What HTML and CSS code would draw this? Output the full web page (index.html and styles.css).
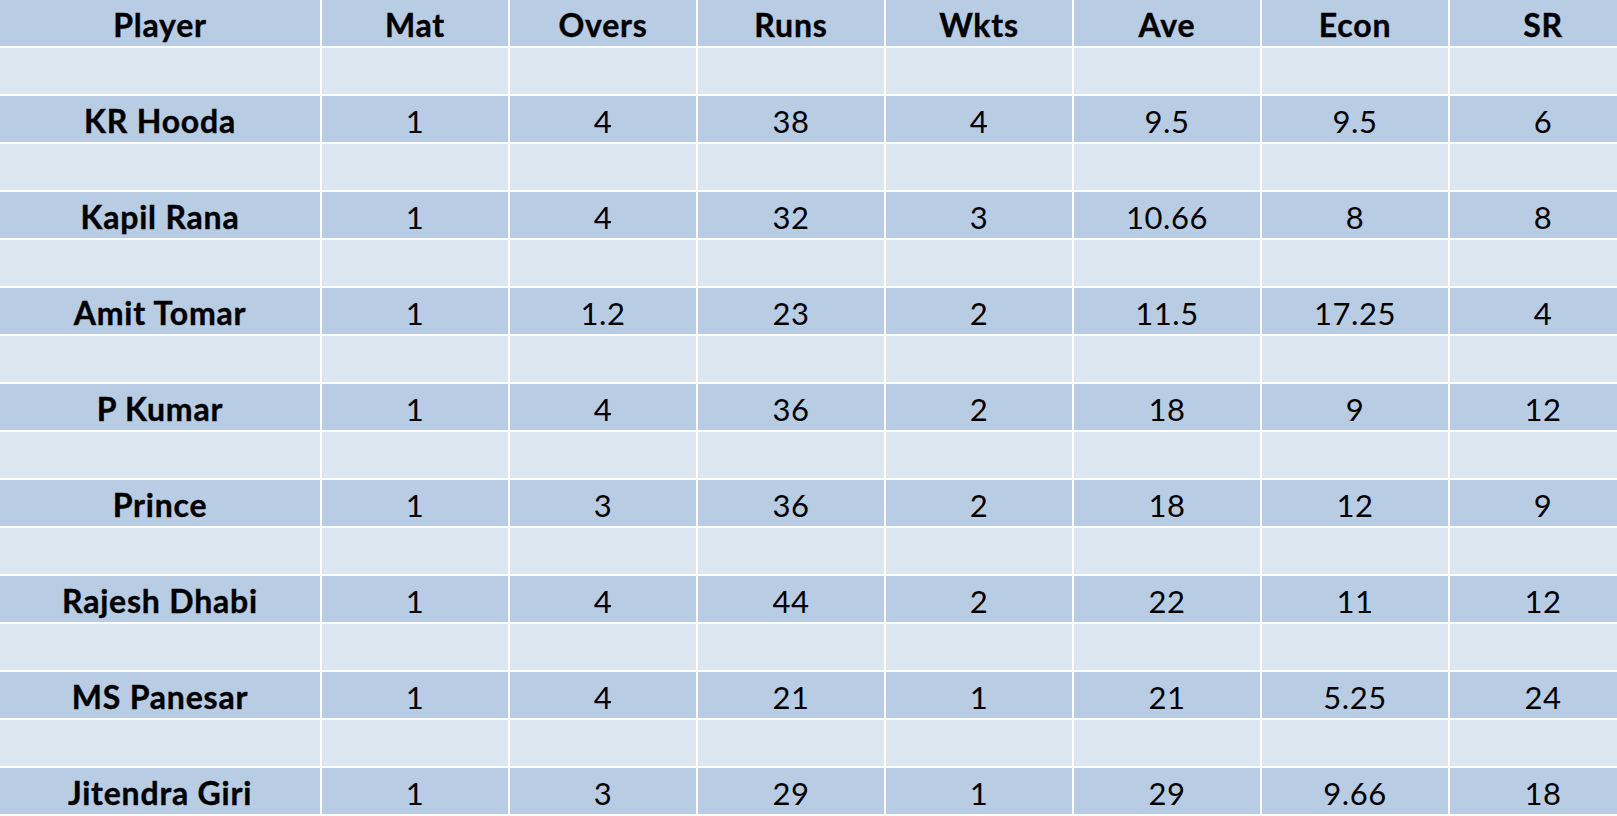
FILE: index.html
```html
<!DOCTYPE html>
<html>
<head>
<meta charset="utf-8">
<link rel="stylesheet" href="styles.css">
</head>
<body>
<div class="sheet">
  <div class="row dark head">
    <div class="cell name">Player</div><div class="cell">Mat</div><div class="cell">Overs</div><div class="cell">Runs</div><div class="cell">Wkts</div><div class="cell">Ave</div><div class="cell">Econ</div><div class="cell">SR</div>
  </div>
  <div class="row light"><div class="cell"></div><div class="cell"></div><div class="cell"></div><div class="cell"></div><div class="cell"></div><div class="cell"></div><div class="cell"></div><div class="cell"></div></div>
  <div class="row dark">
    <div class="cell name">KR Hooda</div><div class="cell">1</div><div class="cell">4</div><div class="cell">38</div><div class="cell">4</div><div class="cell">9.5</div><div class="cell">9.5</div><div class="cell">6</div>
  </div>
  <div class="row light"><div class="cell"></div><div class="cell"></div><div class="cell"></div><div class="cell"></div><div class="cell"></div><div class="cell"></div><div class="cell"></div><div class="cell"></div></div>
  <div class="row dark">
    <div class="cell name">Kapil Rana</div><div class="cell">1</div><div class="cell">4</div><div class="cell">32</div><div class="cell">3</div><div class="cell">10.66</div><div class="cell">8</div><div class="cell">8</div>
  </div>
  <div class="row light"><div class="cell"></div><div class="cell"></div><div class="cell"></div><div class="cell"></div><div class="cell"></div><div class="cell"></div><div class="cell"></div><div class="cell"></div></div>
  <div class="row dark">
    <div class="cell name">Amit Tomar</div><div class="cell">1</div><div class="cell">1.2</div><div class="cell">23</div><div class="cell">2</div><div class="cell">11.5</div><div class="cell">17.25</div><div class="cell">4</div>
  </div>
  <div class="row light"><div class="cell"></div><div class="cell"></div><div class="cell"></div><div class="cell"></div><div class="cell"></div><div class="cell"></div><div class="cell"></div><div class="cell"></div></div>
  <div class="row dark">
    <div class="cell name">P Kumar</div><div class="cell">1</div><div class="cell">4</div><div class="cell">36</div><div class="cell">2</div><div class="cell">18</div><div class="cell">9</div><div class="cell">12</div>
  </div>
  <div class="row light"><div class="cell"></div><div class="cell"></div><div class="cell"></div><div class="cell"></div><div class="cell"></div><div class="cell"></div><div class="cell"></div><div class="cell"></div></div>
  <div class="row dark">
    <div class="cell name">Prince</div><div class="cell">1</div><div class="cell">3</div><div class="cell">36</div><div class="cell">2</div><div class="cell">18</div><div class="cell">12</div><div class="cell">9</div>
  </div>
  <div class="row light"><div class="cell"></div><div class="cell"></div><div class="cell"></div><div class="cell"></div><div class="cell"></div><div class="cell"></div><div class="cell"></div><div class="cell"></div></div>
  <div class="row dark">
    <div class="cell name">Rajesh Dhabi</div><div class="cell">1</div><div class="cell">4</div><div class="cell">44</div><div class="cell">2</div><div class="cell">22</div><div class="cell">11</div><div class="cell">12</div>
  </div>
  <div class="row light"><div class="cell"></div><div class="cell"></div><div class="cell"></div><div class="cell"></div><div class="cell"></div><div class="cell"></div><div class="cell"></div><div class="cell"></div></div>
  <div class="row dark">
    <div class="cell name">MS Panesar</div><div class="cell">1</div><div class="cell">4</div><div class="cell">21</div><div class="cell">1</div><div class="cell">21</div><div class="cell">5.25</div><div class="cell">24</div>
  </div>
  <div class="row light"><div class="cell"></div><div class="cell"></div><div class="cell"></div><div class="cell"></div><div class="cell"></div><div class="cell"></div><div class="cell"></div><div class="cell"></div></div>
  <div class="row dark">
    <div class="cell name">Jitendra Giri</div><div class="cell">1</div><div class="cell">3</div><div class="cell">29</div><div class="cell">1</div><div class="cell">29</div><div class="cell">9.66</div><div class="cell">18</div>
  </div>
</div>
</body>
</html>
```

FILE: styles.css
```css
html, body {
  margin: 0;
  padding: 0;
  background: #ffffff;
  overflow: hidden;
  width: 1617px;
  height: 816px;
}
.sheet {
  display: flex;
  flex-direction: column;
  gap: 2px;
  width: 1636px;
  font-family: Lato, "Liberation Sans", sans-serif;
  font-size: 31px;
  letter-spacing: 0.6px;
  color: #000;
}
.row {
  display: grid;
  grid-template-columns: 320px repeat(7, 186px);
  column-gap: 2px;
  height: 46px;
}
.cell {
  display: flex;
  align-items: center;
  justify-content: center;
  padding-top: 3px;
  box-sizing: border-box;
  white-space: nowrap;
}
.dark .cell { background: #b8cce4; }
.light .cell { background: #dce6f1; }
.head .cell,
.name {
  font-weight: 700;
  font-size: 32px;
  letter-spacing: 0.8px;
  -webkit-text-stroke: 0.4px #000;
}
```
